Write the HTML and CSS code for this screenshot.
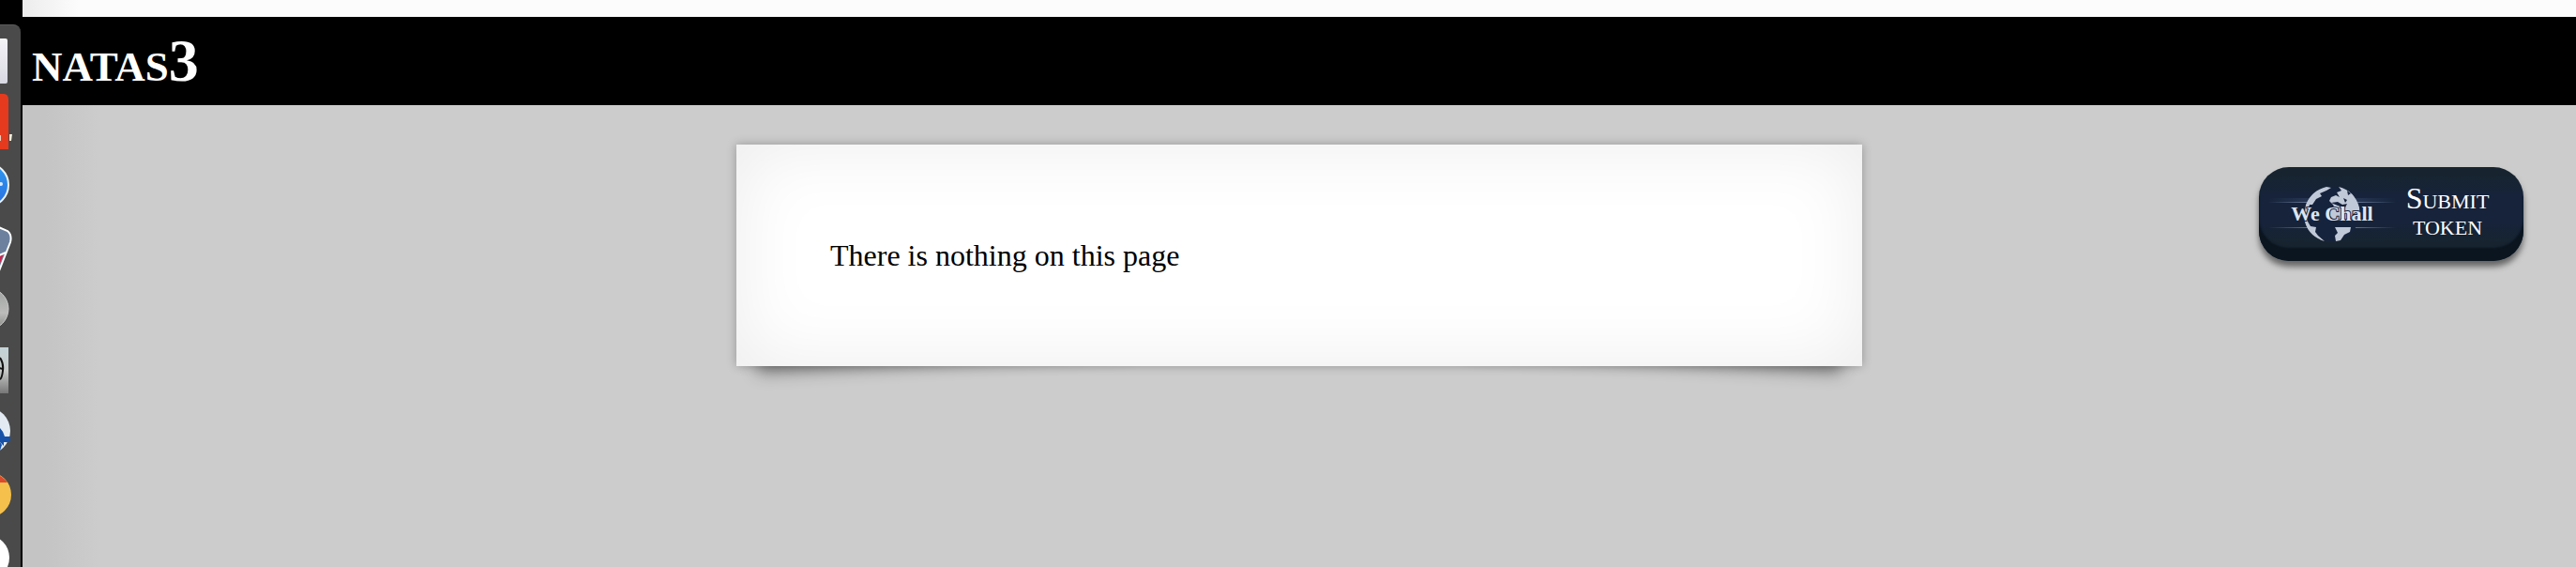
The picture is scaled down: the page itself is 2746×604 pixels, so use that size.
FILE: index.html
```html
<!DOCTYPE html>
<html lang="en">
<head>
<meta charset="utf-8">
<title>natas3</title>
<link rel="stylesheet" href="styles.css">
</head>
<body>
<aside class="dock">
  <div class="dock-panel">
    <svg class="dock-icons" viewBox="0 0 22 577" preserveAspectRatio="xMinYMin meet" aria-hidden="true">
      <defs>
        <linearGradient id="paper" x1="0" y1="0" x2="0" y2="1"><stop offset="0" stop-color="#f4f4f6"/><stop offset="1" stop-color="#d9d9e3"/></linearGradient>
        <linearGradient id="blue" x1="0" y1="0" x2="0" y2="1"><stop offset="0" stop-color="#2f9af0"/><stop offset="1" stop-color="#2a6fe0"/></linearGradient>
        <linearGradient id="silver" x1="0" y1="0" x2="0" y2="1"><stop offset="0" stop-color="#9da19f"/><stop offset=".6" stop-color="#bcbdba"/><stop offset="1" stop-color="#858583"/></linearGradient>
        <linearGradient id="photo" x1="0" y1="0" x2="0" y2="1"><stop offset="0" stop-color="#c3d3d8"/><stop offset=".5" stop-color="#c8cbc8"/><stop offset="1" stop-color="#777"/></linearGradient>
      </defs>
      <rect x="-8" y="14" width="16" height="48" rx="2" fill="url(#paper)"/>
      <path d="M-2 73H4Q9 73 9 79V132H-2z" fill="#e63a1e"/>
      <rect x="-2" y="117" width="3" height="6" fill="#f0c9b8"/>
      <path d="M10 116h3l-1 7h-2z" fill="#f1eedb"/>
      <circle cx="-14" cy="170" r="23" fill="url(#blue)" stroke="#edf3f5" stroke-width="2"/>
      <circle cx="1" cy="169" r="2" fill="#dcecff"/>
      <path d="M-4 214L8 219Q13 223 11 231L-2 264z" fill="#6d819f" stroke="#fff" stroke-width="2"/>
      <path d="M-1 246l5-3-5 13z" fill="#c92850"/>
      <path d="M-1 245l7-3" stroke="#fff" stroke-width="2"/>
      <circle cx="-13" cy="302" r="22" fill="url(#silver)" stroke="#ccc" stroke-width="1"/>
      <rect x="-8" y="343" width="17" height="49" fill="url(#photo)"/>
      <path d="M0 354q4 6 3 14q-1 8-3 9M-1 365l4 1" fill="none" stroke="#111" stroke-width="2"/>
      <circle cx="-14" cy="432" r="25" fill="#e3eaf1"/>
      <path d="M0 429Q4 433 5 438H11V444H4V448L0 444z" fill="#1751a7"/>
      <path d="M0 444V453L2 447z" fill="#1751a7"/>
      <circle cx="-12" cy="500" r="24" fill="#f5c04b"/>
      <path d="M0 480Q4 482 8 487H0z" fill="#d94a2e"/>
      <circle cx="-14" cy="567" r="24" fill="#fff"/>
    </svg>
  </div>
</aside>
<div class="browser">
  <div class="toolbar"></div>
  <header class="banner"><h1>natas3</h1></header>
  <main class="page">
    <div class="content"><p>There is nothing on this page</p></div>
    <button class="token" type="button">
      <svg class="logo" viewBox="0 0 136 68" role="img" aria-label="We Chall">
        <defs>
          <linearGradient id="ray"><stop offset="0" stop-color="#8c9cbd" stop-opacity="0"/><stop offset=".5" stop-color="#8c9cbd"/><stop offset="1" stop-color="#8c9cbd" stop-opacity="0"/></linearGradient>
          <linearGradient id="haze"><stop offset="0" stop-color="#43557d" stop-opacity="0"/><stop offset=".5" stop-color="#43557d" stop-opacity=".6"/><stop offset="1" stop-color="#43557d" stop-opacity="0"/></linearGradient>
        </defs>
        <rect y="17" width="136" height="5" fill="url(#haze)"/>
        <rect y="21" width="136" height="1" fill="url(#ray)"/>
        <rect y="48" width="136" height="1" fill="url(#ray)"/>
        <circle cx="68" cy="34" r="29" fill="#16233c"/>
        <g fill="#c0c9d8">
          <path d="M40 24Q46 9 62 5L67 6L62 9L55 12L57 15L51 18L47 24L44 24L41 32L42 42L45 47L51 48L50 53L53 57L60 63Q41 57 38 38z"/>
          <path d="M75 5Q92 9 97 27L98 40L89 41H70L66 36L66 29L70 25L65 20L67 16L72 14L76 16L73 11L78 9z"/>
          <path d="M71 48L88 48L87 53L81 56L77 62L72 63L71 57L74 54z"/>
        </g>
        <path d="M67 22l7-1 5 3 5-1-2 4-8-2zM80 17l4 2-2 3zM84 9l4 3-3 2z" fill="#16233c"/>
        <text x="68" y="41" text-anchor="middle">We Chall</text>
      </svg>
      <span class="token-label">Submit token</span>
    </button>
  </main>
</div>
</body>
</html>
```
FILE: styles.css
```css
* { box-sizing: border-box; }
body {
  margin: 0;
  min-height: 100vh;
  display: flex;
  background: #ccc;
  font-family: "Liberation Serif", "Times New Roman", serif;
  font-size: 32px;
}
.dock {
  width: 24px;
  flex: none;
  display: flex;
  padding: 26px 2px 0 0;
  background: #000;
}
.dock-panel {
  flex: 1;
  overflow: hidden;
  border-top-right-radius: 8px;
  border-top: 1px solid #5c5c5c;
  background: #4a4a4a;
}
.dock-icons { display: block; width: 100%; }
.browser { flex: 1; display: flex; flex-direction: column; }
.toolbar {
  height: 18px;
  background: linear-gradient(90deg, #ececec, #fcfcfc 60px);
}
.banner { background: #000; padding: 10px; }
.banner h1 {
  margin: 0;
  color: #fff;
  font-size: 64px;
  line-height: 74px;
  font-variant: small-caps;
}
.page {
  flex: 1;
  display: grid;
  grid-template-columns: 1fr 1200px 1fr;
  align-items: start;
  padding-top: 42px;
  background: linear-gradient(90deg, #c4c4c4 24px, #ccc 80px);
  isolation: isolate;
}
.content {
  grid-column: 2;
  position: relative;
  padding: 68px 100px;
  background: #fff;
  box-shadow: 0 0 10px rgba(0, 0, 0, .27), inset 0 0 80px rgba(0, 0, 0, .08);
}
/* Lifted lower corners */
.content::before,
.content::after {
  content: "";
  position: absolute;
  z-index: -1;
  bottom: 30px;
  width: 50%;
  max-width: 400px;
  height: 20%;
  box-shadow: 0 26px 18px rgba(0, 0, 0, .45);
}
.content::before { left: 20px; transform: rotate(-3deg); }
.content::after { right: 20px; transform: rotate(3deg); }
.content p { margin: 32px 0; line-height: 36px; }
.token {
  grid-column: 3;
  justify-self: end;
  display: flex;
  align-items: center;
  width: 282px;
  margin: 24px 56px 0 0;
  padding: 16px 26px 16px 10px;
  border: 0;
  border-radius: 32px;
  background: linear-gradient(#172430 10%, #16233a 30%, #16233a 60%, #172430 80%);
  box-shadow: inset 0 -14px 2px #0a1520, 0 6px 6px rgba(0, 0, 0, .5);
  color: #fff;
  font: inherit;
  font-variant: small-caps;
  line-height: 28px;
}
.logo { width: 136px; flex: none; }
.logo text {
  font-family: "Liberation Serif", serif;
  font-size: 22px;
  font-weight: bold;
  font-variant: normal;
  fill: #dde4ef;
  stroke: #16233c;
  stroke-width: 2px;
  paint-order: stroke;
}
.token-label { flex: 1; padding-bottom: 6px; text-align: center; }
```
